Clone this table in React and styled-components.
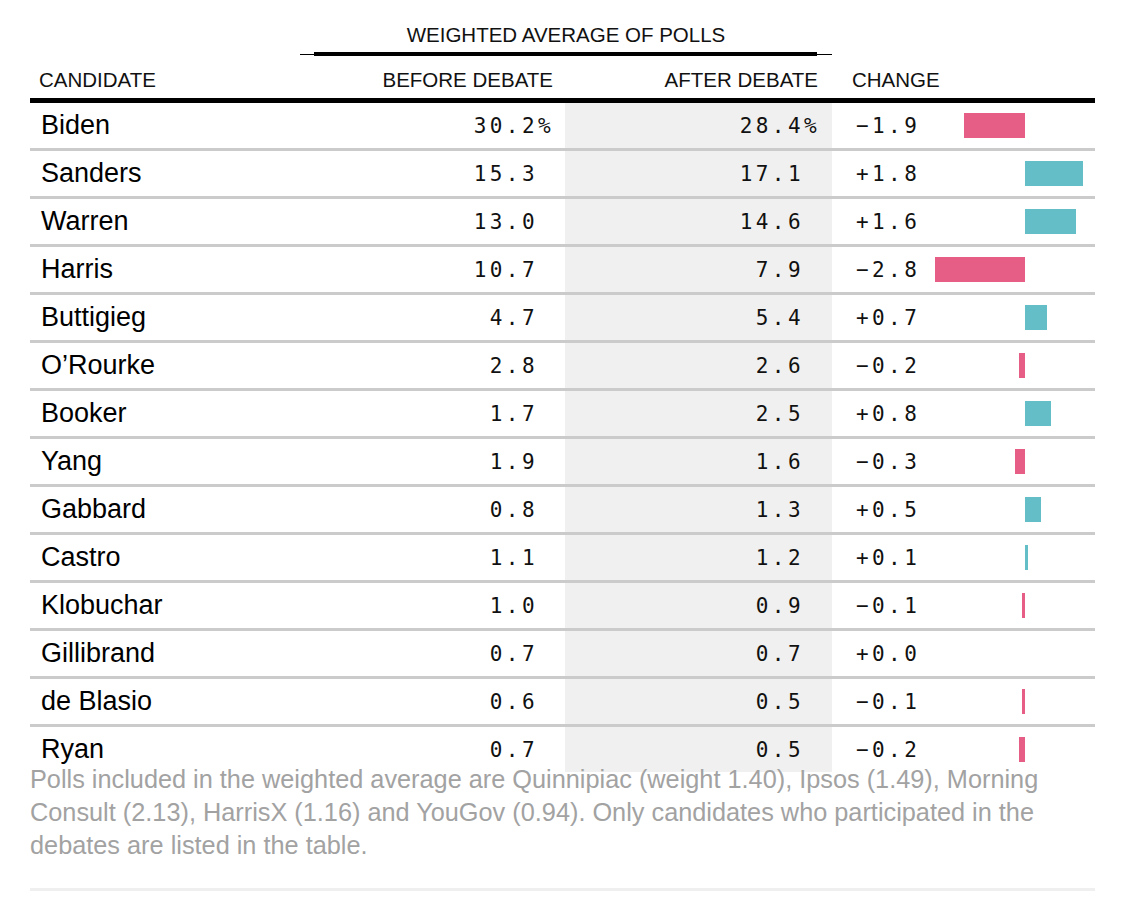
import styled, { createGlobalStyle } from "styled-components";

const GlobalStyle = createGlobalStyle`
  body {
    margin: 0;
    background: #fff;
    font-family: "Liberation Sans", Arial, sans-serif;
    color: #000;
  }
`;

const COLS = "270px 265px 267px 263px";
const PX_PER_POINT = 32;

const candidates = [
  { name: "Biden", before: "30.2%", after: "28.4%", change: -1.9 },
  { name: "Sanders", before: "15.3", after: "17.1", change: 1.8 },
  { name: "Warren", before: "13.0", after: "14.6", change: 1.6 },
  { name: "Harris", before: "10.7", after: "7.9", change: -2.8 },
  { name: "Buttigieg", before: "4.7", after: "5.4", change: 0.7 },
  { name: "O’Rourke", before: "2.8", after: "2.6", change: -0.2 },
  { name: "Booker", before: "1.7", after: "2.5", change: 0.8 },
  { name: "Yang", before: "1.9", after: "1.6", change: -0.3 },
  { name: "Gabbard", before: "0.8", after: "1.3", change: 0.5 },
  { name: "Castro", before: "1.1", after: "1.2", change: 0.1 },
  { name: "Klobuchar", before: "1.0", after: "0.9", change: -0.1 },
  { name: "Gillibrand", before: "0.7", after: "0.7", change: 0 },
  { name: "de Blasio", before: "0.6", after: "0.5", change: -0.1 },
  { name: "Ryan", before: "0.7", after: "0.5", change: -0.2 },
];

const Page = styled.div`
  padding: 0 30px;
  width: 1065px;
`;

const GroupRow = styled.div`
  display: grid;
  grid-template-columns: ${COLS};
  padding-top: 23px;
`;

const GroupCell = styled.div`
  grid-column: 2 / span 2;
  display: flex;
  flex-direction: column;
  align-items: center;
`;

const GroupLabel = styled.div`
  font-size: 20.5px;
  line-height: 24px;
  color: #111;
  margin-bottom: 5px;
`;

const GroupRule = styled.div`
  align-self: stretch;
  height: 4px;
  display: flex;
  padding: 0 15px 0 14px;
  background: linear-gradient(#000, #000) center / 100% 1px no-repeat;
`;

const RuleBar = styled.div`
  flex: 1;
  background: #000;
`;

const HeadRow = styled.div`
  display: grid;
  grid-template-columns: ${COLS};
  padding: 12px 0 6px;
  border-bottom: 5px solid #000;
`;

const HeadCell = styled.div`
  font-size: 20.5px;
  line-height: 24px;
  color: #111;
  text-align: ${(p) => (p.$right ? "right" : "left")};
  padding: ${(p) => p.$pad};
`;

const Row = styled.div`
  display: grid;
  grid-template-columns: ${COLS};
  height: ${(p) => (p.$last ? "36px" : "45px")};
  border-bottom: ${(p) => (p.$last ? "none" : "3px solid #cbcbcb")};
`;

const Name = styled.div`
  display: flex;
  align-items: center;
  padding-left: 11px;
  font-size: 27px;
  color: #000;
`;

const Num = styled.div`
  display: flex;
  align-items: center;
  justify-content: flex-end;
  padding-right: ${(p) => p.$pad};
  background: ${(p) => (p.$shade ? "#f0f0f0" : "transparent")};
  font-family: "DejaVu Sans Mono", "Liberation Mono", monospace;
  font-size: 21px;
  letter-spacing: 3.4px;
  white-space: pre;
  color: #111;
`;

const ChangeCell = styled.div`
  display: grid;
  grid-template-columns: 1fr 100px 70px;
  align-items: start;
  padding-left: 24px;
`;

const ChangeText = styled.div`
  height: 45px;
  display: flex;
  align-items: center;
  font-family: "DejaVu Sans Mono", "Liberation Mono", monospace;
  font-size: 21px;
  letter-spacing: 3.4px;
  color: #111;
`;

const Half = styled.div`
  display: flex;
  justify-content: ${(p) => (p.$neg ? "flex-end" : "flex-start")};
  padding-top: 10px;
`;

const Bar = styled.div`
  height: 25px;
  background: ${(p) => (p.$neg ? "#e65e86" : "#64bec8")};
`;

const Note = styled.p`
  margin: 0;
  font-size: 25.3px;
  line-height: 33px;
  color: #a2a2a2;
`;

const BottomRule = styled.div`
  margin-top: 26px;
  height: 3px;
  background: #efefef;
`;

const pad = (v) => (v.endsWith("%") ? v : v + "\u00a0");
const fmt = (c) => (c < 0 ? "\u2212" : "+") + Math.abs(c).toFixed(1);

const App = () => {
  return (
    <Page>
      <GlobalStyle />
      <GroupRow>
        <GroupCell>
          <GroupLabel>WEIGHTED AVERAGE OF POLLS</GroupLabel>
          <GroupRule>
            <RuleBar />
          </GroupRule>
        </GroupCell>
      </GroupRow>
      <HeadRow>
        <HeadCell $pad="0 0 0 9px">CANDIDATE</HeadCell>
        <HeadCell $right $pad="0 12px 0 0">BEFORE DEBATE</HeadCell>
        <HeadCell $right $pad="0 14px 0 0">AFTER DEBATE</HeadCell>
        <HeadCell $pad="0 0 0 20px">CHANGE</HeadCell>
      </HeadRow>
      {candidates.map((c, i) => {
        const neg = c.change < 0;
        const w = Math.abs(c.change) * PX_PER_POINT;
        return (
          <Row key={c.name} $last={i === candidates.length - 1}>
            <Name>{c.name}</Name>
            <Num $pad="11px">{pad(c.before)}</Num>
            <Num $pad="12px" $shade>
              {pad(c.after)}
            </Num>
            <ChangeCell>
              <ChangeText>{fmt(c.change)}</ChangeText>
              <Half $neg>{neg && <Bar $neg style={{ width: w }} />}</Half>
              <Half>{!neg && w > 0 && <Bar style={{ width: w }} />}</Half>
            </ChangeCell>
          </Row>
        );
      })}
      <Note>
        Polls included in the weighted average are Quinnipiac (weight 1.40), Ipsos (1.49), Morning
        Consult (2.13), HarrisX (1.16) and YouGov (0.94). Only candidates who participated in the
        debates are listed in the table.
      </Note>
      <BottomRule />
    </Page>
  );
};

export default App;
